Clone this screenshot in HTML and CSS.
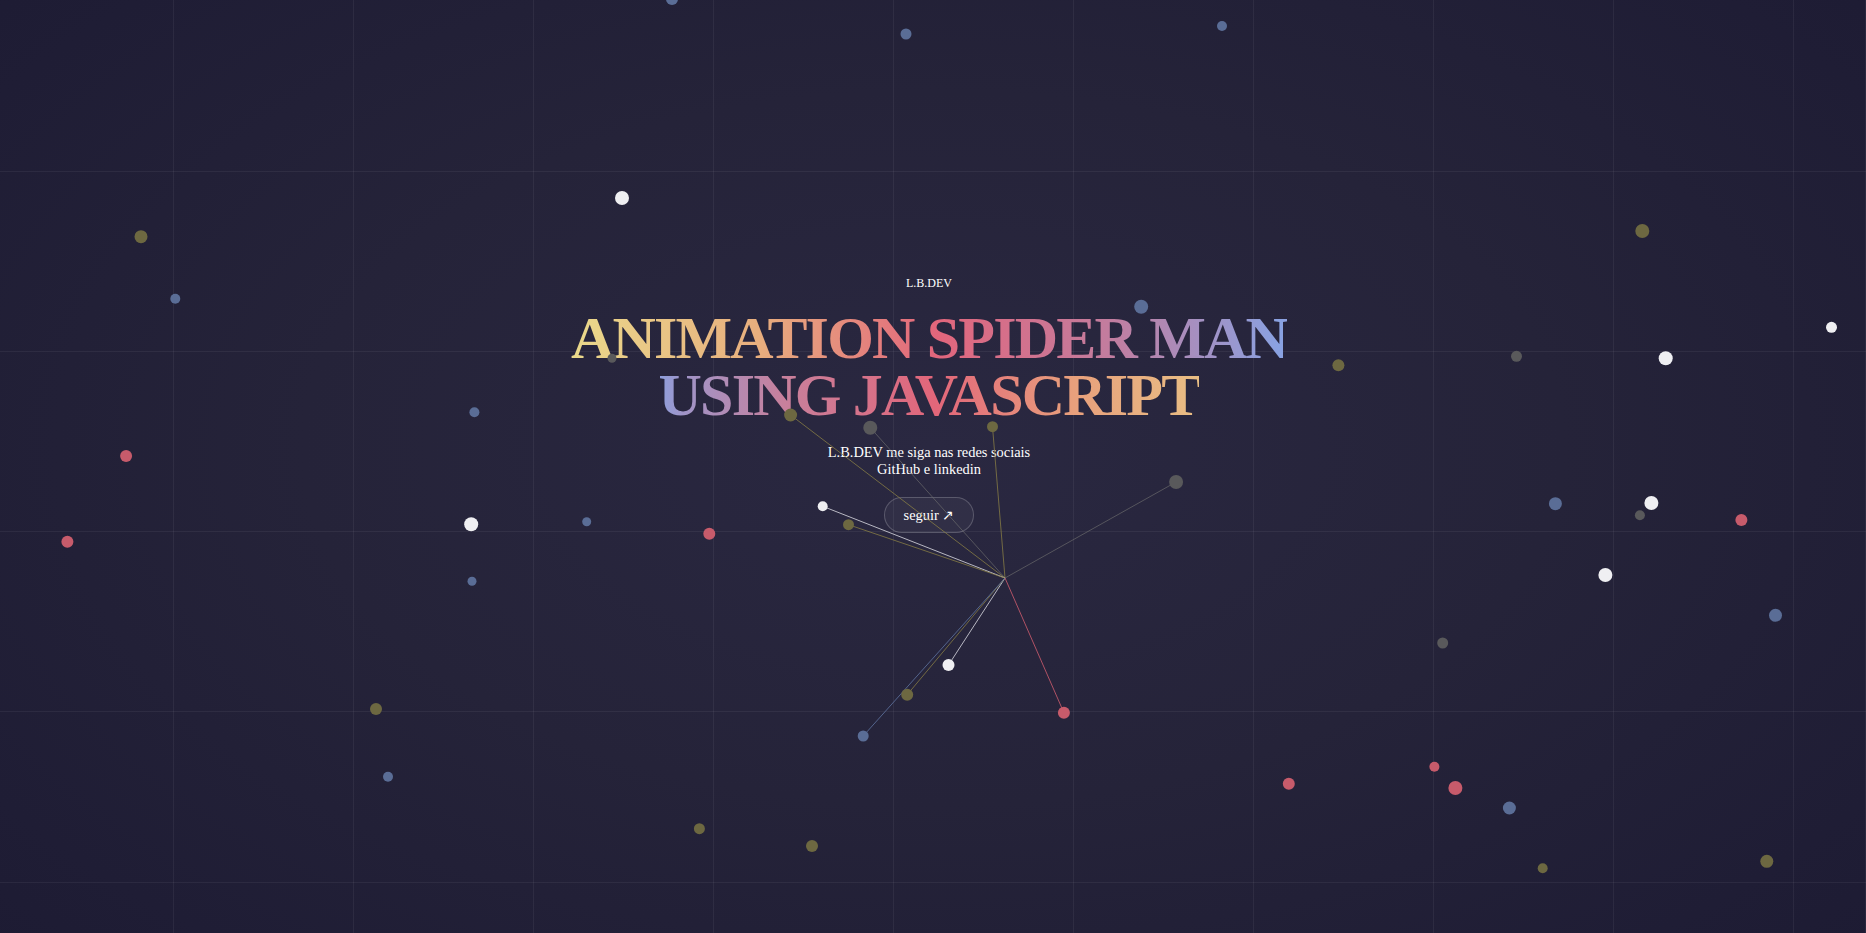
FILE: index.html
```html
<!DOCTYPE html>
<html lang="pt-BR">
<head>
<meta charset="utf-8">
<title>Animation Spider Man using JavaScript</title>
<link rel="stylesheet" href="styles.css">
</head>
<body>
<main class="hero">
  <p class="brand">L.B.DEV</p>
  <h1 class="title"><span class="title-text">ANIMATION SPIDER MAN USING JAVASCRIPT</span></h1>
  <p class="subtitle">L.B.DEV me siga nas redes sociais<br>GitHub e linkedin</p>
  <a class="follow" href="#">seguir ↗</a>
</main>

<svg class="web" viewBox="0 0 1866 933" preserveAspectRatio="none" aria-hidden="true">
  <g class="threads">
    <line x1="1005" y1="578" x2="790.6" y2="415" class="t-olive"/>
    <line x1="1005" y1="578" x2="870.3" y2="427.7" class="t-gray"/>
    <line x1="1005" y1="578" x2="992.5" y2="426.7" class="t-olive"/>
    <line x1="1005" y1="578" x2="1176.1" y2="482" class="t-gray"/>
    <line x1="1005" y1="578" x2="822.7" y2="506.3" class="t-white"/>
    <line x1="1005" y1="578" x2="848.5" y2="524.7" class="t-olive"/>
    <line x1="1005" y1="578" x2="948.5" y2="665" class="t-white"/>
    <line x1="1005" y1="578" x2="907.2" y2="694.7" class="t-olive"/>
    <line x1="1005" y1="578" x2="863.2" y2="736" class="t-blue"/>
    <line x1="1005" y1="578" x2="1063.9" y2="712.7" class="t-red"/>
  </g>
  <g class="dots">
    <circle cx="672" cy="-1" r="6" class="d-blue"/>
    <circle cx="906" cy="34" r="5.5" class="d-blue"/>
    <circle cx="1222" cy="26" r="5" class="d-blue"/>
    <circle cx="622" cy="198" r="7" class="d-white"/>
    <circle cx="141" cy="236.7" r="6.5" class="d-olive"/>
    <circle cx="175.3" cy="298.7" r="5" class="d-blue"/>
    <circle cx="1642.3" cy="231" r="7" class="d-olive"/>
    <circle cx="1141.2" cy="306.7" r="7" class="d-blue"/>
    <circle cx="1831.5" cy="327.3" r="5.5" class="d-white"/>
    <circle cx="1665.7" cy="358.3" r="7" class="d-white"/>
    <circle cx="1516.5" cy="356.3" r="5.5" class="d-gray"/>
    <circle cx="1338.4" cy="365.3" r="6" class="d-olive"/>
    <circle cx="612" cy="358.3" r="4.5" class="d-gray"/>
    <circle cx="474.4" cy="412.3" r="5" class="d-blue"/>
    <circle cx="790.6" cy="415" r="6.5" class="d-olive"/>
    <circle cx="870.3" cy="427.7" r="7" class="d-gray"/>
    <circle cx="992.5" cy="426.7" r="5.5" class="d-olive"/>
    <circle cx="126.1" cy="456" r="6" class="d-red"/>
    <circle cx="1176.1" cy="482" r="7" class="d-gray"/>
    <circle cx="822.7" cy="506.3" r="5" class="d-white"/>
    <circle cx="848.5" cy="524.7" r="5.5" class="d-olive"/>
    <circle cx="586.7" cy="521.7" r="4.5" class="d-blue"/>
    <circle cx="471.2" cy="524.3" r="7" class="d-white"/>
    <circle cx="709.3" cy="533.7" r="6" class="d-red"/>
    <circle cx="67.4" cy="541.7" r="6" class="d-red"/>
    <circle cx="1555.4" cy="503.7" r="6.5" class="d-blue"/>
    <circle cx="1651.4" cy="503" r="7" class="d-white"/>
    <circle cx="1639.9" cy="515.3" r="5" class="d-gray"/>
    <circle cx="1741.4" cy="520" r="6" class="d-red"/>
    <circle cx="472" cy="581.3" r="4.5" class="d-blue"/>
    <circle cx="1605.4" cy="575" r="7" class="d-white"/>
    <circle cx="1775.5" cy="615.3" r="6.5" class="d-blue"/>
    <circle cx="1442.7" cy="643" r="5.5" class="d-gray"/>
    <circle cx="948.5" cy="665" r="6" class="d-white"/>
    <circle cx="907.2" cy="694.7" r="6" class="d-olive"/>
    <circle cx="1063.9" cy="712.7" r="6" class="d-red"/>
    <circle cx="376" cy="709" r="6" class="d-olive"/>
    <circle cx="863.2" cy="736" r="5.5" class="d-blue"/>
    <circle cx="388" cy="776.7" r="5" class="d-blue"/>
    <circle cx="1288.8" cy="783.7" r="6" class="d-red"/>
    <circle cx="1434.4" cy="766.7" r="5" class="d-red"/>
    <circle cx="1455.4" cy="788" r="7" class="d-red"/>
    <circle cx="1509.4" cy="808" r="6.5" class="d-blue"/>
    <circle cx="699.4" cy="828.7" r="5.5" class="d-olive"/>
    <circle cx="812" cy="846" r="6" class="d-olive"/>
    <circle cx="1542.7" cy="868.3" r="5" class="d-olive"/>
    <circle cx="1766.8" cy="861.3" r="6.5" class="d-olive"/>
  </g>
</svg>
</body>
</html>
```

FILE: styles.css
```css
:root {
  --grid: rgba(255, 255, 255, 0.055);
}

html,
body {
  margin: 0;
  height: 100%;
}

body {
  min-height: 100vh;
  overflow: hidden;
  color: #ffffff;
  font-family: "Liberation Serif", "Times New Roman", serif;
  background:
    linear-gradient(var(--grid), var(--grid)) 0 171px / 100% 1px no-repeat,
    linear-gradient(var(--grid), var(--grid)) 0 351px / 100% 1px no-repeat,
    linear-gradient(var(--grid), var(--grid)) 0 531px / 100% 1px no-repeat,
    linear-gradient(var(--grid), var(--grid)) 0 711px / 100% 1px no-repeat,
    linear-gradient(var(--grid), var(--grid)) 0 882px / 100% 1px no-repeat,
    linear-gradient(var(--grid), var(--grid)) 1865px 0 / 1px 100% no-repeat,
    linear-gradient(to right, var(--grid) 1px, transparent 1px) 173px 0 / 180px 100% repeat-x,
    radial-gradient(ellipse 75% 85% at 50% 48%, #2a2841 0%, #252339 45%, #1f1d35 80%, #1c1a32 100%);
  background-color: #1f1d35;
}

.hero {
  position: relative;
  z-index: 1;
  display: flex;
  flex-direction: column;
  align-items: center;
  padding: 276px 8px 0 0;
  text-align: center;
}

.brand {
  margin: 0;
  font-size: 12px;
  line-height: normal;
}

.title {
  max-width: 780px;
  margin: 19px 0 0;
  font-size: 60px;
  font-weight: 700;
  line-height: 57px;
  letter-spacing: -1.8px;
}

.title-text {
  background-image: linear-gradient(90deg,
    #ead98b 0%,
    #e8ae7e 15%,
    #e2667c 29%,
    #c27d9f 43%,
    #89a2e2 56.5%,
    #a094c8 59%,
    #c8809c 67%,
    #e2667a 79%,
    #e8a07c 90%,
    #e9be84 100%);
  -webkit-background-clip: text;
  background-clip: text;
  color: transparent;
  -webkit-text-fill-color: transparent;
}

.subtitle {
  margin: 19.5px 0 0;
  font-size: 14.4px;
  line-height: normal;
}

.follow {
  display: inline-block;
  margin-top: 19.5px;
  padding: 8.5px 19px;
  border: 1px solid rgba(255, 255, 255, 0.2);
  border-radius: 999px;
  background: rgba(255, 255, 255, 0.04);
  color: #ffffff;
  font-size: 14.4px;
  line-height: normal;
  text-decoration: none;
}

.web {
  position: fixed;
  inset: 0;
  z-index: 2;
  width: 100%;
  height: 100%;
  pointer-events: none;
}

.threads line {
  stroke-width: 1;
  fill: none;
}

.t-olive { stroke: rgba(140, 130, 70, 0.75); }
.t-gray { stroke: rgba(110, 110, 110, 0.65); }
.t-white { stroke: rgba(220, 220, 228, 0.8); stroke-width: 1.3; }
.t-blue { stroke: rgba(92, 112, 155, 0.85); }
.t-red { stroke: rgba(200, 90, 108, 0.85); }

.d-white { fill: #efeff2; }
.d-olive { fill: #6d6841; }
.d-blue { fill: #5a6d96; }
.d-red { fill: #c75b6b; }
.d-gray { fill: #59595b; }
```
